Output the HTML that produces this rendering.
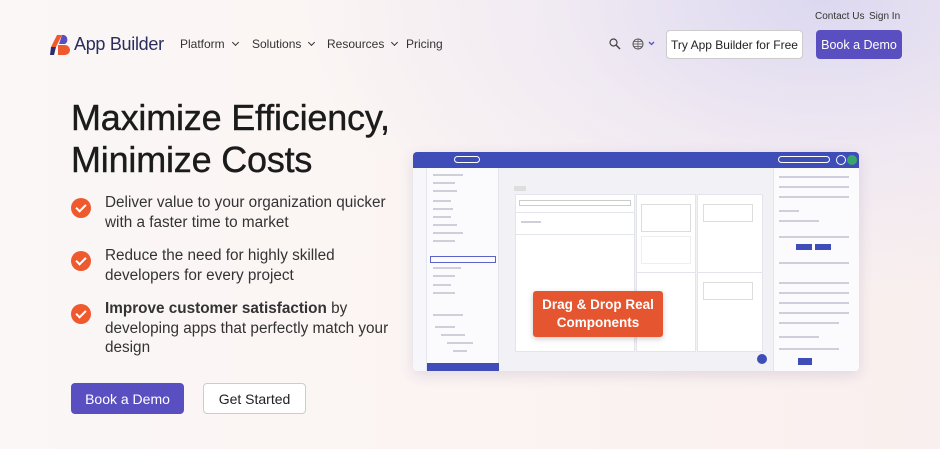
<!DOCTYPE html>
<html><head><meta charset="utf-8"><style>
*{margin:0;padding:0;box-sizing:border-box}
body{width:940px;height:449px;overflow:hidden;font-family:"Liberation Sans",sans-serif;color:#222;position:relative;
background:radial-gradient(ellipse 520px 300px at 820px 0px,#dcd8f0 0%,rgba(230,225,245,0.5) 50%,rgba(255,255,255,0) 100%),linear-gradient(90deg,#fbf7f7 0%,#fbf4f2 50%,#f9efee 100%)}
.a{position:absolute}
.nav{font-size:12px;color:#333}
.chev{display:inline-block;width:5px;height:5px;border-right:1.4px solid #333;border-bottom:1.4px solid #333;transform:rotate(45deg);margin-left:8px;position:relative;top:-3px}
.btn{position:absolute;border-radius:4px;font-size:12px;display:flex;align-items:center;justify-content:center}
.li{position:absolute;left:105px;font-size:15.3px;line-height:19.5px;color:#333;width:300px}
.ck{position:absolute;left:71px;width:20px;height:20px;border-radius:50%;background:#ee5a2e}
.ck:after{content:"";position:absolute;left:7px;top:4px;width:4px;height:8px;border-right:2px solid #fff;border-bottom:2px solid #fff;transform:rotate(45deg)}
.card{position:absolute;background:#fff;border:1px solid #e4e4ec}
.t{position:absolute;height:2px;background:#cfcfdc}
</style></head><body>
<div class="a nav" style="left:815px;top:11px;font-size:10px">Contact Us</div>
<div class="a nav" style="left:869px;top:11px;font-size:10px">Sign In</div>
<svg class="a" style="left:50px;top:35px" width="20" height="20" viewBox="0 0 20 20"><path d="M7 0h5l-6 12H1z" fill="#ee5a2e"/><path d="M12 0h2a5 5 0 0 1 1 9l-6 0z" fill="#5a4fc0"/><path d="M1 12h5l-2 8H0z" fill="#2b2d6e"/><path d="M8 10h7a5 5 0 0 1 0 10H8z" fill="#ee5a2e"/></svg>
<div class="a" style="left:74px;top:34px;font-size:18px;color:#2b2d5e;letter-spacing:-.3px">App Builder</div>
<div class="a nav" style="left:180px;top:37px">Platform<span class="chev"></span></div>
<div class="a nav" style="left:252px;top:37px">Solutions<span class="chev"></span></div>
<div class="a nav" style="left:327px;top:37px">Resources<span class="chev"></span></div>
<div class="a nav" style="left:406px;top:37px">Pricing</div>
<svg class="a" style="left:609px;top:38px" width="12" height="12" viewBox="0 0 12 12"><circle cx="4.5" cy="4.5" r="3.5" fill="none" stroke="#444" stroke-width="1.2"/><path d="M7 7l4 4" stroke="#444" stroke-width="1.4"/></svg>
<svg class="a" style="left:632px;top:38px" width="24" height="12" viewBox="0 0 24 12"><circle cx="6" cy="6" r="5" fill="none" stroke="#555"/><path d="M1 6h10M6 1v10M2 3.5h8M2 8.5h8" stroke="#555" stroke-width=".7"/><path d="M17 4l2.5 2.5L22 4" fill="none" stroke="#5a4fc0" stroke-width="1.3"/></svg>
<div class="btn" style="left:666px;top:30px;width:137px;height:29px;background:#fff;border:1px solid #ccc;color:#222;font-size:12px">Try App Builder for Free</div>
<div class="btn" style="left:816px;top:30px;width:86px;height:29px;background:#5a4fc0;color:#fff;font-size:12.5px">Book a Demo</div>
<div class="a" style="left:71px;top:97px;font-size:36px;line-height:42px;color:#1b1b1b;letter-spacing:-.2px;-webkit-text-stroke:.4px #1b1b1b">Maximize Efficiency,<br>Minimize Costs</div>
<div class="ck" style="top:198px"></div><div class="li" style="top:193px">Deliver value to your organization quicker with a faster time to market</div>
<div class="ck" style="top:251px"></div><div class="li" style="top:246px">Reduce the need for highly skilled developers for every project</div>
<div class="ck" style="top:304px"></div><div class="li" style="top:299px"><b>Improve customer satisfaction</b> by developing apps that perfectly match your design</div>
<div class="btn" style="left:71px;top:383px;width:113px;height:31px;background:#5a4fc0;color:#fff;font-size:14px">Book a Demo</div>
<div class="btn" style="left:203px;top:383px;width:103px;height:31px;background:#fff;border:1px solid #ccc;color:#222;font-size:14px">Get Started</div>
<div class="a" style="left:413px;top:152px;width:446px;height:219px;background:#f1f1f6;border-radius:4px;overflow:hidden;box-shadow:0 4px 14px rgba(80,60,120,.15)">
 <div class="a" style="left:0;top:0;width:446px;height:16px;background:#3f4db8"></div>
 <div class="a" style="left:41px;top:4px;width:26px;height:7px;border:1px solid #fff;border-radius:4px"></div>
 <div class="a" style="left:365px;top:4px;width:52px;height:7px;border:1px solid #fff;border-radius:4px"></div>
 <div class="a" style="left:423px;top:3px;width:10px;height:10px;border:1px solid #fff;border-radius:50%"></div>
 <div class="a" style="left:434px;top:3px;width:10px;height:10px;background:#3aa56a;border-radius:50%"></div>
 <div class="a" style="left:0;top:16px;width:14px;height:203px;background:#f7f6fb;border-right:1px solid #e4e4ec"></div>
 <div class="a" style="left:14px;top:16px;width:72px;height:203px;background:#fbfafd;border-right:1px solid #e4e4ec"></div>
 <div class="t" style="left:20px;top:22px;width:30px"></div><div class="t" style="left:20px;top:30px;width:22px"></div><div class="t" style="left:20px;top:38px;width:24px"></div>
 <div class="t" style="left:20px;top:48px;width:18px"></div><div class="t" style="left:20px;top:56px;width:20px"></div><div class="t" style="left:20px;top:64px;width:18px"></div>
 <div class="t" style="left:20px;top:72px;width:24px"></div><div class="t" style="left:20px;top:80px;width:30px"></div><div class="t" style="left:20px;top:88px;width:22px"></div>
 <div class="a" style="left:17px;top:104px;width:66px;height:7px;border:1px solid #5a64c8"></div>
 <div class="t" style="left:20px;top:115px;width:28px"></div><div class="t" style="left:20px;top:123px;width:22px"></div><div class="t" style="left:20px;top:132px;width:18px"></div><div class="t" style="left:20px;top:140px;width:22px"></div>
 <div class="t" style="left:20px;top:162px;width:30px"></div><div class="t" style="left:22px;top:174px;width:20px"></div><div class="t" style="left:28px;top:182px;width:24px"></div><div class="t" style="left:34px;top:190px;width:26px"></div><div class="t" style="left:40px;top:198px;width:14px"></div>
 <div class="a" style="left:14px;top:211px;width:72px;height:8px;background:#3f4db8"></div>
 <div class="a" style="left:360px;top:16px;width:86px;height:203px;background:#fbfafd;border-left:1px solid #e4e4ec"></div>
 <div class="t" style="left:366px;top:24px;width:70px"></div><div class="t" style="left:366px;top:34px;width:70px"></div><div class="t" style="left:366px;top:44px;width:70px"></div>
 <div class="t" style="left:366px;top:58px;width:20px"></div><div class="t" style="left:366px;top:68px;width:40px"></div>
 <div class="t" style="left:366px;top:84px;width:70px"></div><div class="t" style="left:366px;top:110px;width:70px"></div>
 <div class="t" style="left:366px;top:130px;width:70px"></div><div class="t" style="left:366px;top:140px;width:70px"></div><div class="t" style="left:366px;top:150px;width:70px"></div><div class="t" style="left:366px;top:160px;width:70px"></div><div class="t" style="left:366px;top:170px;width:60px"></div><div class="t" style="left:366px;top:184px;width:40px"></div><div class="t" style="left:366px;top:196px;width:60px"></div>
 <div class="a" style="left:383px;top:92px;width:16px;height:6px;background:#3f4db8"></div>
 <div class="a" style="left:402px;top:92px;width:16px;height:6px;background:#3f4db8"></div>
 <div class="a" style="left:385px;top:206px;width:14px;height:7px;background:#3f4db8"></div>
 <div class="card" style="left:102px;top:42px;width:120px;height:158px"></div>
 <div class="a" style="left:106px;top:48px;width:112px;height:6px;border:1px solid #ccc"></div>
 <div class="a" style="left:103px;top:60px;width:118px;height:1px;background:#e4e4ec"></div>
 <div class="t" style="left:108px;top:69px;width:20px"></div>
 <div class="a" style="left:103px;top:82px;width:118px;height:1px;background:#e4e4ec"></div>
 <div class="card" style="left:223px;top:42px;width:60px;height:158px"></div>
 <div class="card" style="left:284px;top:42px;width:66px;height:158px"></div>
 <div class="a" style="left:228px;top:52px;width:50px;height:28px;border:1px solid #ddd"></div>
 <div class="a" style="left:228px;top:84px;width:50px;height:28px;border:1px solid #eee"></div>
 <div class="a" style="left:290px;top:52px;width:50px;height:18px;border:1px solid #ddd"></div>
 <div class="a" style="left:290px;top:130px;width:50px;height:18px;border:1px solid #ddd"></div>
 <div class="a" style="left:223px;top:120px;width:60px;height:1px;background:#e4e4ec"></div>
 <div class="a" style="left:284px;top:120px;width:66px;height:1px;background:#e4e4ec"></div>
 <div class="a" style="left:101px;top:34px;width:12px;height:5px;background:#ddd"></div>
 <div class="a" style="left:344px;top:202px;width:10px;height:10px;border-radius:50%;background:#3f4db8"></div>
</div>
<div class="a" style="left:533px;top:291px;width:130px;height:46px;background:#e5552f;border-radius:3px;color:#fff;font-weight:bold;font-size:13.5px;line-height:18px;text-align:center;padding-top:5px;box-shadow:0 2px 6px rgba(0,0,0,.2)">Drag &amp; Drop Real<br>Components</div>
</body></html>
